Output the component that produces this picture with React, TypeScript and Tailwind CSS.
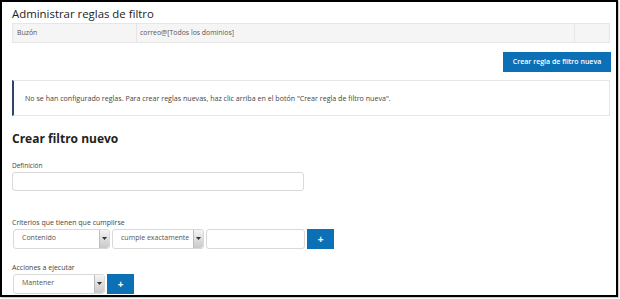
import React from "react";

function Caret() {
  return (
    <div className="w-[10px] self-stretch flex items-center justify-center border-l border-[#bdbdbd] bg-gradient-to-b from-[#f4f4f4] to-[#c9c9c9] rounded-r-[3px]">
      <svg width="5" height="3" viewBox="0 0 5 3"><path d="M0 0h5L2.5 3z" fill="#333" /></svg>
    </div>
  );
}

function Select({ w, label }: { w: string; label: string }) {
  return (
    <div className={`${w} h-[20px] flex border border-[#d9d9d9] rounded-[3px] bg-white`}>
      <div className="flex-1 flex items-center pl-[8px] text-[7px] text-[#555]">{label}</div>
      <Caret />
    </div>
  );
}

function Plus() {
  return (
    <div className="w-[27px] h-[20px] bg-[#0b70b6] flex items-center justify-center">
      <span className="text-white text-[10px] font-bold leading-none">+</span>
    </div>
  );
}

export default function App() {
  return (
    <div className="w-[620px] h-[299px] bg-white" style={{ fontFamily: '"Open Sans", sans-serif' }}>
      <div className="w-[618px] h-[297px] border-2 border-black bg-white pl-[10px] pr-[6px] shadow-[1px_1px_1px_#ccc]">
        <div className="h-[21px] flex items-center text-[11.4px] text-[#222] pt-[3px]">Administrar reglas de filtro</div>
        <div className="h-[20px] flex bg-[#f5f5f5] border border-[#e6e6e6] text-[6.9px] text-[#555]">
          <div className="w-[124px] flex items-center pl-[4px] border-r border-[#e6e6e6]">Buzón</div>
          <div className="flex-1 flex items-center pl-[3px] border-r border-[#e6e6e6]">correo@[Todos los dominios]</div>
          <div className="w-[34px]" />
        </div>
        <div className="flex justify-end mt-[9px]">
          <div className="w-[108px] h-[20px] bg-[#0b70b6] text-white text-[7px] font-semibold flex items-center justify-center mr-[-1px]">Crear regla de filtro nueva</div>
        </div>
        <div className="mt-[8px] h-[36px] border border-[#e6e6e6] border-l-2 border-l-[#2f4766] flex items-center pl-[11px] text-[7.1px] text-[#444]">
          No se han configurado reglas. Para crear reglas nuevas, haz clic arriba en el botón "Crear regla de filtro nueva".
        </div>
        <div className="mt-[17px] text-[12px] font-bold text-[#222] leading-none">Crear filtro nuevo</div>
        <div className="mt-[18px] text-[6.5px] text-[#444] leading-none">Definición</div>
        <div className="mt-[2px] w-[292px] h-[19px] border border-[#d9d9d9] rounded-[3px]" />
        <div className="mt-[28px] text-[7px] text-[#444] leading-none">Criterios que tienen que cumplirse</div>
        <div className="mt-[3px] flex gap-[2px] items-center pl-[1px]">
          <Select w="w-[97px]" label="Contenido" />
          <Select w="w-[92px]" label="cumple exactamente" />
          <div className="w-[99px] h-[20px] border border-[#d9d9d9] rounded-[3px]" />
          <Plus />
        </div>
        <div className="mt-[15px] text-[7px] text-[#444] leading-none">Acciones a ejecutar</div>
        <div className="mt-[3px] flex gap-[2px] items-center pl-[1px]">
          <Select w="w-[92px]" label="Mantener" />
          <Plus />
        </div>
      </div>
    </div>
  );
}
